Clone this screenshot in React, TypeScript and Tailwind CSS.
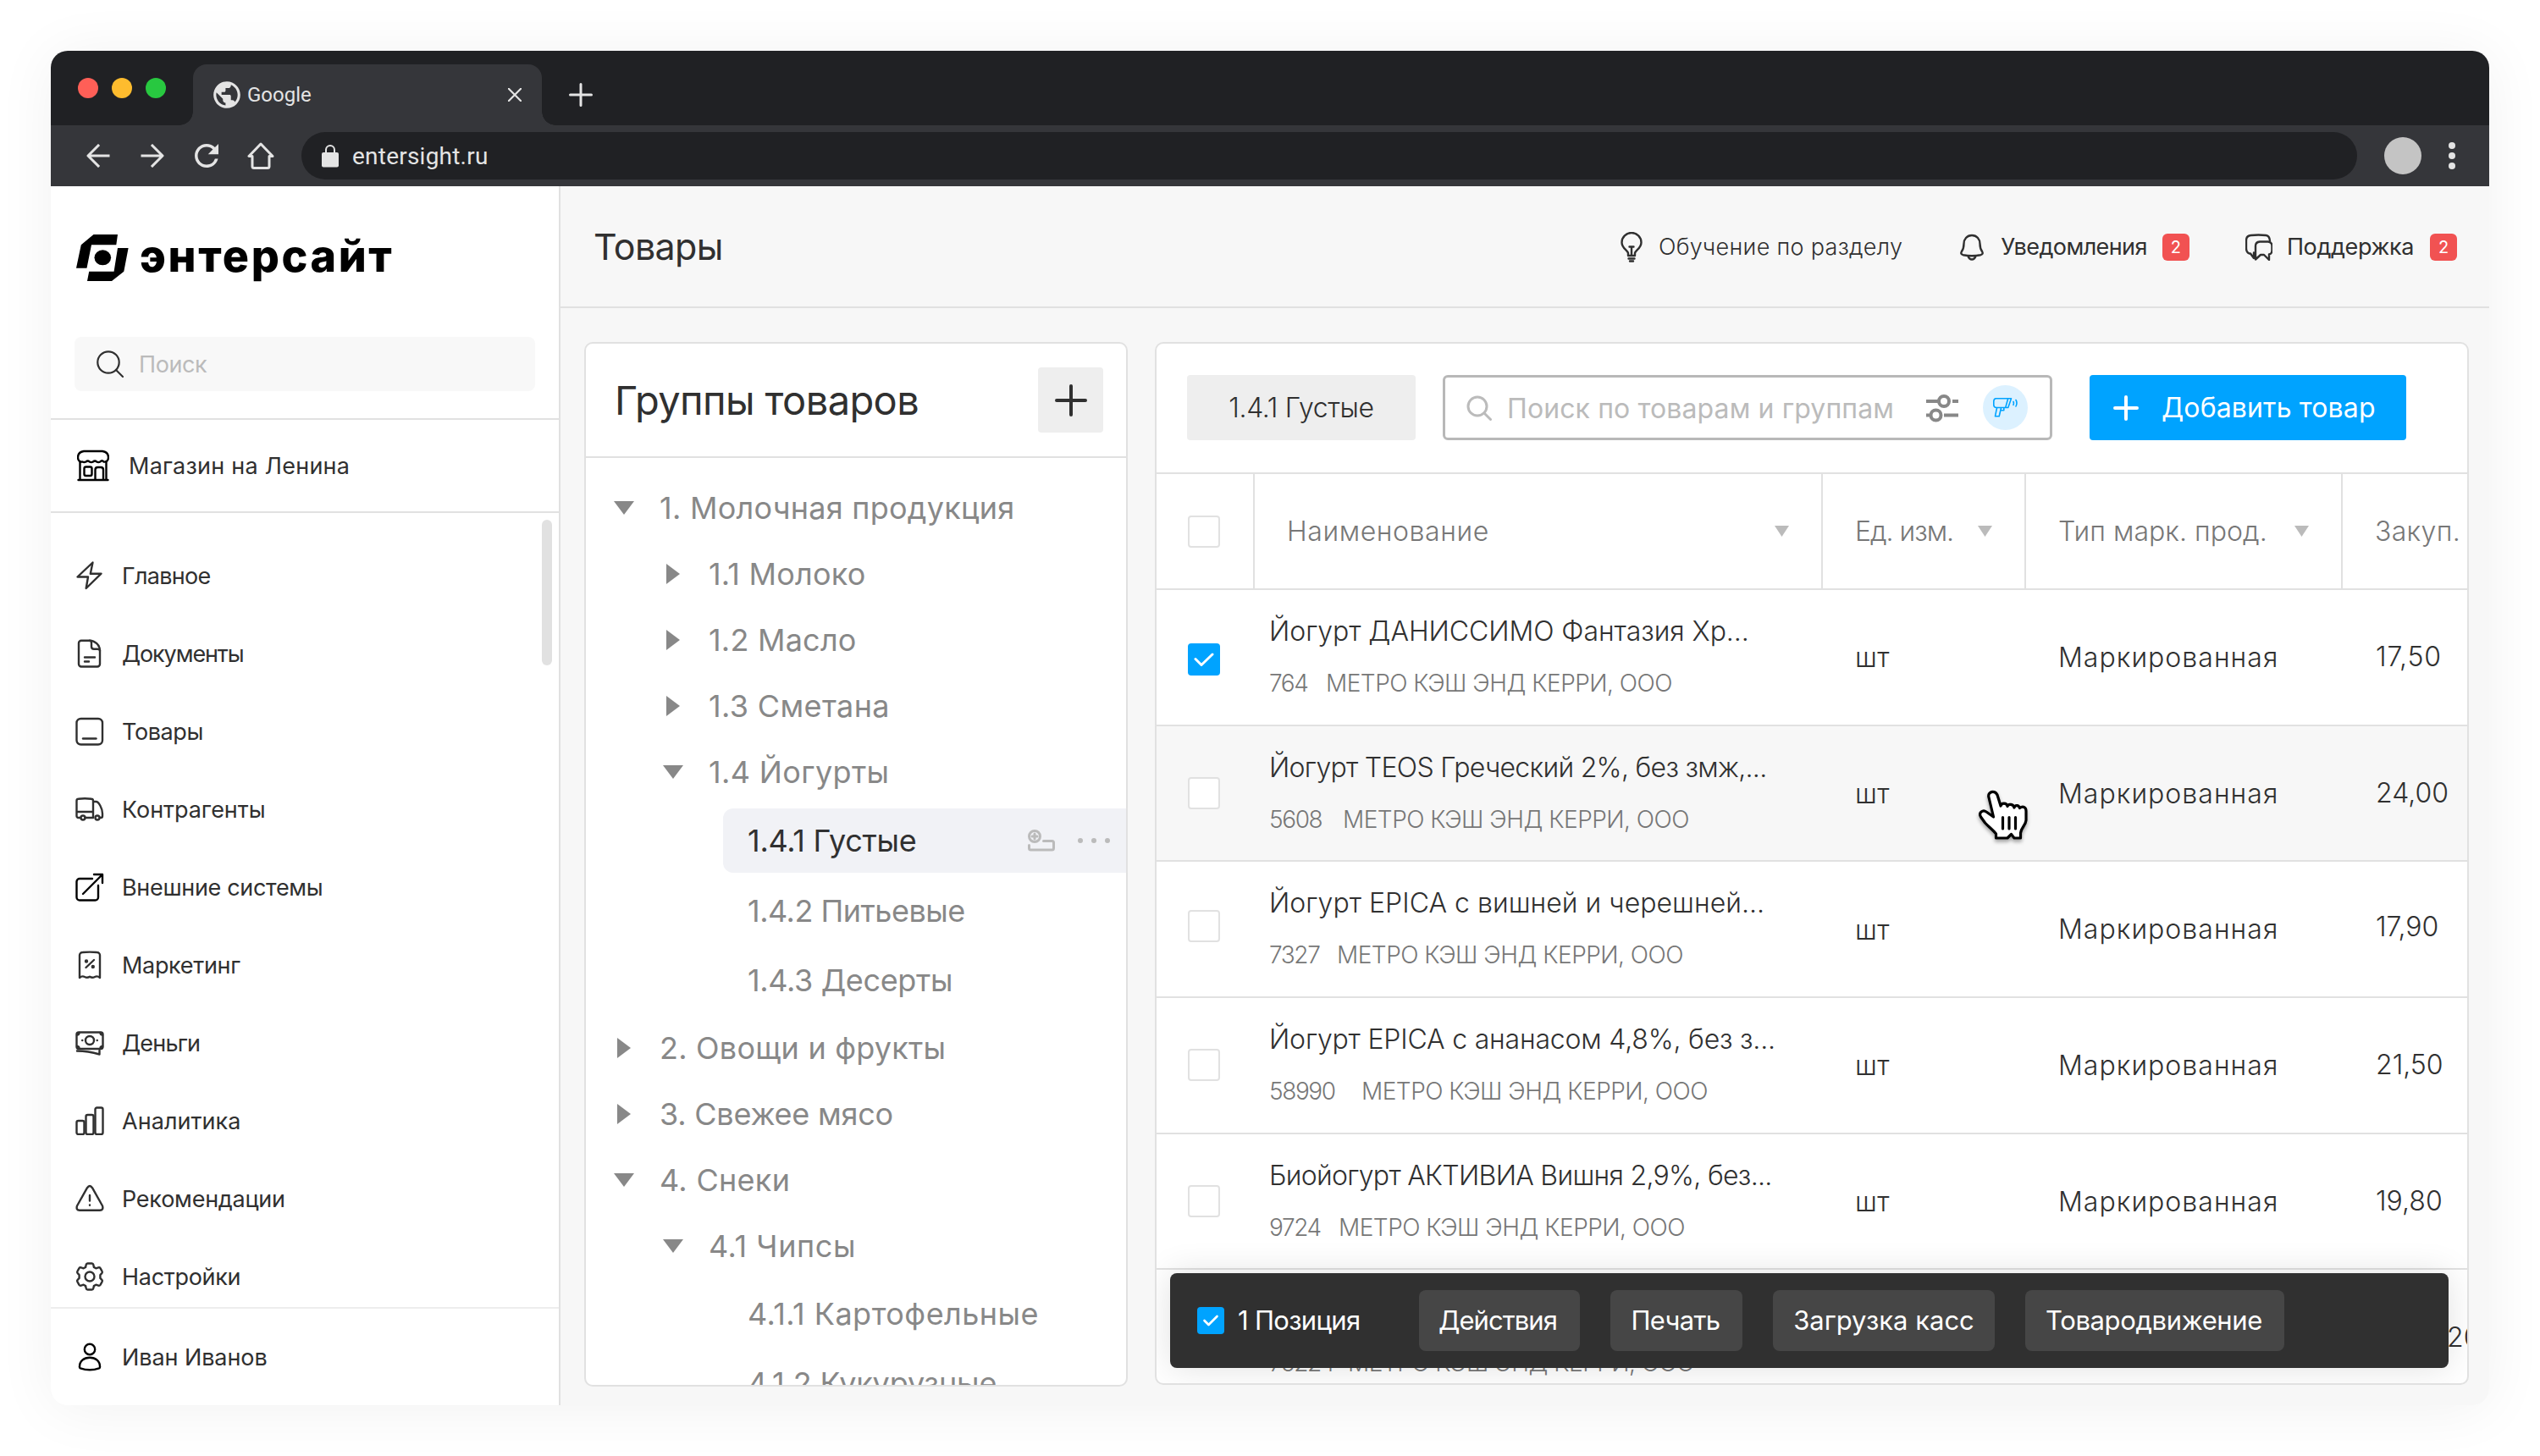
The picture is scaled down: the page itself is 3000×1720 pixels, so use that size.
import type { ReactNode } from "react";
import clsx from "clsx";
import { MdPublic, MdRefresh } from "react-icons/md";

const iconProps = {
  fill: "none",
  stroke: "currentColor",
  strokeWidth: 2.4,
  strokeLinecap: "round" as const,
  strokeLinejoin: "round" as const,
};

function MenuIcon({ children }: { children: ReactNode }) {
  return (
    <svg viewBox="0 0 34 34" className="size-[34px] shrink-0" {...iconProps}>
      {children}
    </svg>
  );
}

const menu = [
  {
    label: "Главное",
    tracking: "tracking-[-0.026em]",
    icon: <path d="M20.5 1.5 2.5 18.5H15L12.7 32 30.5 14.7H17.8Z" />,
  },
  {
    label: "Документы",
    tracking: "tracking-[-0.041em]",
    icon: (
      <>
        <path d="M17 1.7H7A3 3 0 0 0 4 4.7V29.5a3 3 0 0 0 3 3h19a3 3 0 0 0 3-3V13.5C29 7 23 1.7 17 1.7Z" />
        <path d="M17 1.7c1.5 0 2 1.5 2 3v4c0 2 1 3 3 3h4c2 0 3 .5 3 2M11 21.5h12M11 26.5h5" />
      </>
    ),
  },
  {
    label: "Товары",
    tracking: "tracking-[-0.015em]",
    icon: (
      <>
        <rect x="1.5" y="2" width="30.5" height="30.5" rx="5" />
        <path d="M9 25.5h15.5" />
      </>
    ),
  },
  {
    label: "Контрагенты",
    tracking: "tracking-[-0.002em]",
    icon: (
      <>
        <path d="M6 27H3.5a2 2 0 0 1-2-2V7q0-2 2-2.200Q11 3.800 19 4.800q2 .2 2 2.200V27H11.500M1.500 20H21M21 8h3.500c3 0 7.500 8 7.500 14v3a2 2 0 0 1-2 2h-1" />
        <circle cx="9" cy="27" r="2.5" />
        <circle cx="26" cy="27" r="2.5" />
      </>
    ),
  },
  {
    label: "Внешние системы",
    tracking: "tracking-[-0.012em]",
    icon: (
      <path
        stroke="#000"
        d="M20 7H5a3.500 3.500 0 0 0-3.500 3.500v18.500A3.500 3.500 0 0 0 5 32.500h18.500A3.500 3.500 0 0 0 27 29V15M9 25 32 2M22 2h10v10"
      />
    ),
  },
  {
    label: "Маркетинг",
    tracking: "tracking-[-0.012em]",
    icon: (
      <>
        <path d="M5 32V5.500A3.500 3.500 0 0 1 8.500 2q8.500-.8 17 0A3.500 3.500 0 0 1 29 5.500V32q-3-2.600-6-1-3 1.600-6-.3-3 1.900-6 .3-3-1.600-6 1Z" />
        <path d="m12.500 20 9.500-9" />
        <circle cx="13" cy="12.5" r="1" fill="currentColor" />
        <circle cx="20.8" cy="19" r="1" fill="currentColor" />
      </>
    ),
  },
  {
    label: "Деньги",
    tracking: "tracking-[-0.03em]",
    icon: (
      <>
        <rect x="1.5" y="4.5" width="31" height="19.5" rx="2.5" />
        <circle cx="17" cy="14" r="5" />
        <path d="M2 7.500c1.800 0 2.500-1 2.500-2.500M32 7.500c-1.800 0-2.500-1-2.500-2.500M2 21c1.800 0 2.500 1 2.500 2.500M32 21c-1.800 0-2.500 1-2.500 2.500M8.200 14h.1M25.700 14h.1M2 26.500q13 .2 26.500 4V26" />
      </>
    ),
  },
  {
    label: "Аналитика",
    tracking: "tracking-[0.002em]",
    icon: (
      <>
        <rect x="1.5" y="17" width="9" height="16" rx="2" />
        <rect x="12.5" y="10" width="9" height="23" rx="2" />
        <rect x="23.5" y="1.5" width="9" height="31.5" rx="2" />
      </>
    ),
  },
  {
    label: "Рекомендации",
    tracking: "tracking-[-0.009em]",
    icon: (
      <>
        <path d="M14 4.200q3-4.400 6 0L32 25.500Q33.500 30.500 29 30.700H5Q.5 30.500 2 25.500Z" />
        <path d="M17 13v6.500M17 24.500v.2" />
      </>
    ),
  },
  {
    label: "Настройки",
    tracking: "tracking-[-0.011em]",
    icon: (
      <>
        <path d="M14.500 1.500h5q1.500 0 1.800 1.600l.6 2.800 2.400 1.400 2.900-.9q1.500-.4 2.300.8l2.100 3.600q.8 1.300-.3 2.400l-1.900 1.900v3.800l1.900 1.900q1.100 1.100.3 2.400l-2.100 3.600q-.8 1.200-2.300.8l-2.900-.9-2.400 1.400-.6 2.800q-.3 1.600-1.800 1.600h-5q-1.500 0-1.800-1.600l-.6-2.800-2.400-1.400-2.900.9q-1.500.4-2.300-.8l-2.100-3.600q-.8-1.300.3-2.400l1.900-1.900v-3.800l-1.900-1.900q-1.100-1.100-.3-2.400l2.100-3.600q.8-1.200 2.300-.8l2.900.9 2.400-1.400.6-2.800q.3-1.600 1.800-1.600Z" />
        <circle cx="17" cy="17" r="5.5" />
      </>
    ),
  },
];

const tree = [
  { level: 0, open: true, label: "1. Молочная продукция", tracking: "tracking-[0.007em]" },
  { level: 1, open: false, label: "1.1 Молоко", tracking: "tracking-[0.006em]" },
  { level: 1, open: false, label: "1.2 Масло", tracking: "tracking-[0.006em]" },
  { level: 1, open: false, label: "1.3 Сметана", tracking: "tracking-[0.01em]" },
  { level: 1, open: true, label: "1.4 Йогурты", tracking: "tracking-[0.01em]" },
  { level: 2, selected: true, label: "1.4.1 Густые", tracking: "tracking-[-0.007em]" },
  { level: 2, label: "1.4.2 Питьевые", tracking: "tracking-[-0.014em]" },
  { level: 2, label: "1.4.3 Десерты", tracking: "tracking-[-0.01em]" },
  { level: 0, open: false, label: "2. Овощи и фрукты", tracking: "tracking-[0.006em]" },
  { level: 0, open: false, label: "3. Свежее мясо", tracking: "tracking-[-0.006em]" },
  { level: 0, open: true, label: "4. Снеки", tracking: "tracking-[0.008em]" },
  { level: 1, open: true, label: "4.1 Чипсы", tracking: "tracking-[0.016em]" },
  { level: 2, label: "4.1.1 Картофельные", tracking: "tracking-[0.013em]" },
  { level: 2, label: "4.1.2 Кукурузные", tracking: "tracking-[-0.004em]" },
];

const supplier = "МЕТРО КЭШ ЭНД КЕРРИ, ООО";

const products = [
  { name: "Йогурт ДАНИССИМО Фантазия Хр...", tracking: "tracking-[-0.002em]", code: "764", codeWidth: "w-[67px]", price: "17,50", checked: true, boxClass: "pt-1.5", priceClass: "tracking-[0.025em]" },
  { name: "Йогурт TEOS Греческий 2%, без змж,...", tracking: "tracking-[-0.022em]", code: "5608", codeWidth: "w-[87px]", price: "24,00", hovered: true, boxClass: "", priceClass: "" },
  { name: "Йогурт EPICA с вишней и черешней...", tracking: "tracking-[0.001em]", code: "7327", codeWidth: "w-[80px]", price: "17,90", boxClass: "pb-2", priceClass: "pb-1.5" },
  { name: "Йогурт EPICA с ананасом 4,8%, без з...", tracking: "tracking-[-0.006em]", code: "58990", codeWidth: "w-[109px]", price: "21,50", boxClass: "", priceClass: "" },
  { name: "Биойогурт АКТИВИА Вишня 2,9%, без...", tracking: "tracking-[-0.022em]", code: "9724", codeWidth: "w-[82px]", price: "19,80", boxClass: "", priceClass: "" },
  { name: "Йогурт", tracking: "tracking-normal", code: "75224", codeWidth: "w-[93px]", price: "20,40", boxClass: "", priceClass: "", last: true },
];

const bulkActions = [
  { label: "Действия", className: "w-[190px] pr-1 tracking-[-0.03em]" },
  { label: "Печать", className: "w-[156px] pr-0.5 tracking-[-0.021em]" },
  { label: "Загрузка касс", className: "w-[262px]" },
  { label: "Товародвижение", className: "w-[306px] pr-0.5 tracking-[-0.012em]" },
];

function BrowserBar() {
  return (
    <div className="shrink-0 bg-[#202124] text-[#e4e4e4]">
      <div className="flex h-[88px] items-end">
        <div className="flex w-[168px] gap-4 self-start pt-8 pl-8">
          <span className="size-6 rounded-full bg-[#ff5f57]" />
          <span className="size-6 rounded-full bg-[#febc2e]" />
          <span className="size-6 rounded-full bg-[#28c840]" />
        </div>
        <div className="relative flex h-[72px] w-[412px] items-center rounded-t-2xl bg-[#35363a] pr-6 pl-[21px]">
          <span className="absolute bottom-0 -left-4 size-4 bg-[radial-gradient(circle_at_0_0,transparent_15.5px,#35363a_16px)]" />
          <span className="absolute -right-4 bottom-0 size-4 bg-[radial-gradient(circle_at_100%_0,transparent_15.5px,#35363a_16px)]" />
          <MdPublic className="size-[38px]" />
          <span className="ml-[5px] font-['Roboto',sans-serif] text-2xl leading-none">Google</span>
          <svg viewBox="0 0 16 16" className="ml-auto size-4" {...iconProps} strokeWidth={2.2}>
            <path d="m.8.8 14.400 14.400M15.200.8.8 15.200" />
          </svg>
        </div>
        <svg viewBox="0 0 28 28" className="mb-[22px] ml-8 size-7" {...iconProps} strokeWidth={3}>
          <path d="M14 1.500v25M1.500 14h25" />
        </svg>
      </div>
      <div className="flex h-[72px] items-center bg-[#35363a] pl-[42px]">
        <svg viewBox="0 0 28 28" className="size-7" {...iconProps} strokeWidth={3} strokeLinecap="square">
          <path d="M26 14H3M14 2 2 14l12 12" />
        </svg>
        <svg viewBox="0 0 28 28" className="ml-9 size-7" {...iconProps} strokeWidth={3} strokeLinecap="square">
          <path d="M2 14h23M14 2l12 12-12 12" />
        </svg>
        <MdRefresh className="ml-[29px] size-[42px]" />
        <svg viewBox="0 0 32 32" className="ml-[27px] size-8" {...iconProps} strokeWidth={3}>
          <path d="M16 2 2 16.500h4V28.500a2 2 0 0 0 2 2h16a2 2 0 0 0 2-2V16.500h4Z" />
        </svg>
        <div className="ml-8 flex h-14 w-[2428px] items-center rounded-full bg-[#202124] pl-6">
          <svg viewBox="0 0 20 28" className="h-7 w-5">
            <rect y="10" width="20" height="17.5" rx="2" fill="currentColor" />
            <path d="M5 11V7a5 5 0 0 1 10 0v4" fill="none" stroke="currentColor" strokeWidth="2" />
          </svg>
          <span className="ml-4 pt-px font-['Roboto',sans-serif] text-[28px] leading-none tracking-[0.008em]">
            entersight.ru
          </span>
        </div>
        <span className="ml-8 size-11 rounded-full bg-[#c4c4c4]" />
        <div className="ml-8 flex flex-col gap-1">
          <span className="size-2 rounded-full bg-current" />
          <span className="size-2 rounded-full bg-current" />
          <span className="size-2 rounded-full bg-current" />
        </div>
      </div>
    </div>
  );
}

function Sidebar() {
  return (
    <aside className="flex w-[602px] shrink-0 flex-col border-r-2 border-[#e1e1e1] bg-white">
      <div className="mt-[57px] flex h-[55px] pl-[30px]">
        <svg viewBox="0 0 62 55" className="h-[55px] w-[62px]" fill="#000">
          <path d="M20.500 0H49l-1.700 12.300H18L12.500 39.700H0L5.800 12.300ZM49 16h12.600L56.300 43.700 42 55H13l2.200-11.300h29.400Z" />
          <ellipse cx="31.3" cy="27.3" rx="9.8" ry="9" />
        </svg>
        <span className="ml-[13px] pt-px text-[52px] leading-[50px] font-extrabold tracking-[0.05em] text-black">
          энтерсайт
        </span>
      </div>
      <div className="mx-7 mt-[66px] flex h-16 items-center rounded-lg bg-[#f8f8f8] pl-[26px]">
        <svg viewBox="0 0 32 32" className="size-8" {...iconProps} strokeWidth={2.2}>
          <circle cx="14" cy="14" r="12.7" />
          <path d="m23 23 8 8" />
        </svg>
        <span className="ml-[18px] text-[27px] leading-none tracking-[-0.015em] text-[#bbb]">Поиск</span>
      </div>
      <div className="mt-8 flex h-28 items-center border-y-2 border-[#e1e1e1] pl-[31px]">
        <svg viewBox="0 0 38 38" className="size-[38px] text-black" {...iconProps}>
          <path d="M3.500 14.500v21M34.500 14.500v21M1.500 36h35M21.500 36V24q0-3 3-3h3.500q3 0 3 3v12" />
          <path d="M8 2h22q7 1 7 7.500c0 4-3 5.500-5.500 5q-2-2.500-4.200 0-2.100 1.200-4.200 0-2-2-4.200 0-2.100 1.200-4.200 0-2-2-4.200 0-2.200 1-4.200 0C4 15 1 13.500 1 9.500Q1 3 8 2Z" />
          <rect x="8.5" y="20.5" width="9" height="10.5" rx="2" />
        </svg>
        <span className="ml-[23px] text-[27px] leading-none tracking-[0.009em]">Магазин на Ленина</span>
      </div>
      <nav className="relative min-h-0 flex-1 overflow-hidden pt-7">
        {menu.map((item) => (
          <div key={item.label} className="flex h-[92px] items-center gap-[21px] pl-[29px]">
            <MenuIcon>{item.icon}</MenuIcon>
            <span className={clsx("text-[27px] leading-none", item.tracking)}>{item.label}</span>
          </div>
        ))}
        <span className="absolute top-2 right-2 h-[172px] w-3 rounded-full bg-[#e1e1e1]" />
      </nav>
      <div className="flex h-[116px] shrink-0 items-center gap-[21px] border-t-2 border-[#ededed] pl-[29px]">
        <svg viewBox="0 0 34 34" className="size-[34px] text-black" {...iconProps}>
          <circle cx="17" cy="8" r="6.2" />
          <path d="M5 28.500C5 22 10 17.800 17 17.800S29 22 29 28.500q.2 1.300-1 1.800-11 4-22 0-1.200-.5-1-1.800Z" />
        </svg>
        <span className="text-[27px] leading-none tracking-[-0.003em]">Иван Иванов</span>
      </div>
    </aside>
  );
}

function CountBadge() {
  return (
    <span className="flex size-8 items-center justify-center rounded-md bg-[#f15252] text-xl leading-none text-white">
      2
    </span>
  );
}

function PageHeader() {
  return (
    <header className="flex h-36 shrink-0 items-center border-b-2 border-[#e1e1e1] pt-px pr-[38px] pl-[39px] text-[27px] leading-none">
      <h1 className="text-[43px] leading-none tracking-[-0.015em]">Товары</h1>
      <div className="ml-auto flex items-center gap-[66px]">
        <div className="flex items-center gap-[18px] font-light">
          <svg viewBox="0 0 28 36" className="h-9 w-7" {...iconProps}>
            <path d="M10 28v-3C9.500 21.500 2.500 19.500 2.500 12.500a11.500 11.500 0 0 1 23 0c0 7-7 9-7.500 12.500v3M14 27v-9M11.500 17.500h5M10 28h8M10.500 31.500h7M12 34.500h4" />
          </svg>
          <span className="tracking-[0.011em]">Обучение по разделу</span>
        </div>
        <div className="flex items-center">
          <svg viewBox="0 0 32 32" className="size-8" {...iconProps}>
            <path d="M16 2c-6 0-9.500 4.500-9.500 10 0 5-1 7-2.800 9.500-1.200 2 .2 3.300 2 3.700q10.300 2 20.600 0c1.800-.4 3.200-1.700 2-3.700-1.800-2.500-2.800-4.500-2.800-9.500 0-5.500-3.500-10-9.500-10ZM11.500 26.500c1 3 2.500 4 4.500 4s3.500-1 4.500-4" />
          </svg>
          <span className="ml-[18px] tracking-[-0.0215em]">Уведомления</span>
          <span className="ml-[18px]">
            <CountBadge />
          </span>
        </div>
        <div className="flex items-center">
          <svg viewBox="0 0 32 32" className="size-8" {...iconProps}>
            <path d="M10 22.500V29l-4-5.500H4.500Q1 22 1 17V8q0-5.500 5.500-6 9-1 18 0 4 .5 4.500 6.500" />
            <path d="M17 9.500h10q4.500.5 4.500 5v5q0 4.500-3.500 5V31l-6-6h-4l-6 5.500v-6.500V14.500q0-4.500 5-5Z" />
          </svg>
          <span className="ml-[17px] tracking-[-0.014em]">Поддержка</span>
          <span className="ml-[19px]">
            <CountBadge />
          </span>
        </div>
      </div>
    </header>
  );
}

function TreeArrow({ open }: { open?: boolean }) {
  return (
    <svg viewBox="0 0 24 24" className="size-6" fill="#888">
      {open ? <path d="M0 4h24L12 20Z" /> : <path d="M4 0v24l16-12Z" />}
    </svg>
  );
}

function GroupsPanel() {
  return (
    <section className="flex h-[1234px] w-[642px] shrink-0 flex-col overflow-hidden rounded-[10px] border-2 border-[#e1e1e1] bg-white">
      <div className="flex h-[135px] shrink-0 items-center justify-between border-b-2 border-[#e1e1e1] pr-[27px] pl-[34px]">
        <h2 className="text-[47px] leading-none tracking-[-0.013em]">Группы товаров</h2>
        <span className="flex size-[77px] items-center justify-center rounded bg-[#eee]">
          <svg viewBox="0 0 38 38" className="size-[38px]" {...iconProps} strokeWidth={4}>
            <path d="M19 2v34M2 19h34" />
          </svg>
        </span>
      </div>
      <div className="pt-5 text-[36px] leading-none text-[#888]">
        {tree.map((node) => {
          if (node.selected) {
            return (
              <div key={node.label} className="flex h-[84px] items-center pl-[162px]">
                <div className="flex h-[76px] flex-1 items-center rounded-l-xl bg-[#f1f2f6] pr-[19px] pl-[29px]">
                  <span className={clsx("text-[#303030]", node.tracking)}>{node.label}</span>
                  <svg viewBox="0 0 32 26" className="ml-auto h-[26px] w-8 text-[#bbb]" {...iconProps} strokeWidth={3}>
                    <circle cx="8" cy="8" r="6.5" />
                    <path d="M8 5v6M5 8h6M18.500 13.500h10a2 2 0 0 1 2 2v6.500a2 2 0 0 1-2 2h-25a2 2 0 0 1-2-2v-3.500" />
                  </svg>
                  <div className="ml-[27px] flex gap-2.5 text-[#bbb]">
                    <span className="size-1.5 rounded-full bg-current" />
                    <span className="size-1.5 rounded-full bg-current" />
                    <span className="size-1.5 rounded-full bg-current" />
                  </div>
                </div>
              </div>
            );
          }

          if (node.level === 2) {
            return (
              <div key={node.label} className="flex h-[82px] items-center pl-[191px]">
                <span className={node.tracking}>{node.label}</span>
              </div>
            );
          }

          return (
            <div
              key={node.label}
              className={clsx("flex h-[78px] items-center gap-[30px]", node.level === 0 ? "pl-[33px]" : "pl-[91px]")}
            >
              <TreeArrow open={node.open} />
              <span className={node.tracking}>{node.label}</span>
            </div>
          );
        })}
      </div>
    </section>
  );
}

function Checkbox({ checked }: { checked?: boolean }) {
  if (!checked) {
    return <span className="size-[38px] rounded border-2 border-[#e1e1e1] bg-white" />;
  }

  return (
    <span className="flex size-[38px] items-center justify-center rounded bg-[#00a3ff] text-white">
      <svg viewBox="0 0 24 24" className="size-6" {...iconProps} strokeWidth={3}>
        <path d="m2 11.500 7 7L22 6" />
      </svg>
    </span>
  );
}

function SortArrow() {
  return (
    <svg viewBox="0 0 17 13" className="h-[13px] w-[17px]" fill="#bbb">
      <path d="M0 0h17L8.500 13Z" />
    </svg>
  );
}

function Toolbar() {
  return (
    <div className="flex h-[154px] shrink-0 items-center border-b-2 border-[#e1e1e1] pb-px pl-9 text-[32px] leading-none">
      <span className="flex h-[77px] w-[270px] items-center justify-center rounded bg-[#eee] font-light tracking-[-0.01em]">
        1.4.1 Густые
      </span>
      <div className="ml-8 flex h-[77px] w-[720px] items-center rounded-md border-[3px] border-[#b8b8b8] pl-[25px] text-[#bbb]">
        <svg viewBox="0 0 30 30" className="size-[30px]" {...iconProps} strokeWidth={3}>
          <circle cx="13" cy="13" r="11" />
          <path d="m21.500 21.500 7 7" />
        </svg>
        <span className="ml-[18px] pt-0.5 tracking-[0.0035em]">Поиск по товарам и группам</span>
        <svg viewBox="0 0 40 34" className="ml-[37px] h-[34px] w-10" fill="none" stroke="#888" strokeWidth={4}>
          <path d="M1 9h15M32 9h7M1 25.500h5M22 25.500h17" />
          <circle cx="22" cy="9" r="6" />
          <circle cx="12.5" cy="25.5" r="6" />
        </svg>
        <span className="ml-7 flex size-[53px] items-center justify-center rounded-full bg-[#dcf1ff] text-[#00a3ff]">
          <svg viewBox="0 0 32 26" className="h-[26px] w-8" {...iconProps} strokeWidth={1.6}>
            <path d="M4.500 1.800H22.500L18.800 12.500H5Q2 12.500 1.800 9.500V5Q2 2 4.500 1.800ZM18.700 1.800 15.700 12.500M5.500 13 3.500 22.700H8.200L10.500 13M9.800 15.800h4V13M25 5.500q1 1.800 0 3.800M28 3.500q2 3.500 0 7.500" />
          </svg>
        </span>
      </div>
      <span className="ml-11 flex h-[77px] w-[374px] items-center rounded bg-[#00a3ff] pl-7 text-white">
        <svg viewBox="0 0 30 30" className="size-[30px]" {...iconProps} strokeWidth={4}>
          <path d="M15 2v26M2 15h26" />
        </svg>
        <span className="ml-[27px] tracking-[0.004em]">Добавить товар</span>
      </span>
    </div>
  );
}

function ProductsPanel() {
  return (
    <section className="relative flex h-[1232px] w-[1552px] flex-col overflow-hidden rounded-[10px] border-2 border-[#e1e1e1] bg-white">
      <Toolbar />
      <div className="flex h-[137px] shrink-0 border-b-2 border-[#e1e1e1] text-[32px] leading-none font-light text-[#777]">
        <div className="flex w-[116px] shrink-0 items-center border-r-2 border-[#e1e1e1] pl-[37px]">
          <Checkbox />
        </div>
        <div className="flex w-[671px] shrink-0 items-center justify-between border-r-2 border-[#e1e1e1] pr-[38px] pl-[38px]">
          <span className="tracking-[0.018em]">Наименование</span>
          <SortArrow />
        </div>
        <div className="flex w-[240px] shrink-0 items-center justify-between border-r-2 border-[#e1e1e1] pr-[38px] pl-[38px]">
          <span className="tracking-[-0.032em]">Ед. изм.</span>
          <SortArrow />
        </div>
        <div className="flex w-[374px] shrink-0 items-center justify-between border-r-2 border-[#e1e1e1] pr-[38px] pl-[38px]">
          <span className="tracking-[0.001em]">Тип марк. прод.</span>
          <SortArrow />
        </div>
        <div className="flex items-center pl-[38px] tracking-[0.01em]">Закуп.</div>
      </div>

      {products.map((product) => (
        <div
          key={product.code}
          className={clsx(
            "flex h-[160.7px] shrink-0 border-b-2 border-[#e1e1e1] text-[32px] leading-none font-light",
            product.hovered && "bg-[#f7f7f7]",
          )}
        >
          <div className={clsx("flex w-[116px] shrink-0 items-center pl-[37px]", product.boxClass)}>
            <Checkbox checked={product.checked} />
          </div>
          <div className="w-[671px] shrink-0 pt-[33px] pl-[17px]">
            <p className={clsx("whitespace-nowrap", product.tracking)}>{product.name}</p>
            <p className="mt-[31px] flex text-[28px] leading-none text-[#777]">
              <span className={clsx("shrink-0 tracking-[-0.05em]", product.codeWidth)}>{product.code}</span>
              <span className="tracking-[-0.018em]">{supplier}</span>
            </p>
          </div>
          <div className="flex w-[240px] shrink-0 items-center pt-0.5 pl-[38px] tracking-[0.014em]">шт</div>
          <div className="flex w-[374px] shrink-0 items-center pt-px pl-[38px] tracking-[0.032em]">Маркированная</div>
          <div className={clsx("flex items-center", product.last ? "pl-[123px]" : "pl-[39px]", product.priceClass)}>
            {product.price}
          </div>
        </div>
      ))}

      <div className="absolute top-[1098px] left-4 flex h-28 w-[1510px] items-center rounded-lg bg-[#303030] pl-8 text-[31px] leading-none text-white shadow-[0_0_40px_rgba(0,0,0,0.12)]">
        <span className="flex size-8 items-center justify-center rounded bg-[#00a3ff]">
          <svg viewBox="0 0 24 24" className="size-5" {...iconProps} strokeWidth={3.2}>
            <path d="m3 12 6 6L21 6" />
          </svg>
        </span>
        <span className="w-[230px] pb-0.5 pl-4 tracking-[-0.022em]">1 Позиция</span>
        <div className="flex gap-9">
          {bulkActions.map((action) => (
            <span
              key={action.label}
              className={clsx(
                "flex h-[72px] items-center justify-center rounded-lg bg-[#464646] pb-0.5",
                action.className,
              )}
            >
              {action.label}
            </span>
          ))}
        </div>
      </div>
    </section>
  );
}

function HandCursor() {
  return (
    <svg
      viewBox="-2 -2 62 64"
      className="absolute top-[872px] left-[2275px] h-16 w-[62px] drop-shadow-[0_3px_2px_rgba(0,0,0,0.35)]"
      fill="#fff"
      stroke="#000"
      strokeWidth={3.2}
      strokeLinejoin="round"
      strokeLinecap="round"
    >
      <path d="M12 8C10 1.500 19 -1.500 22 5l4 13C27 14 33 14 34 18.500 35 15 41 16 42 20c1-3.500 5.500-3 6.500.5C52 18 56 19 56 24v11c-.5 6-6 9-6.500 15v6H42l-3.500-4.500L34 56H20.500V51C17 46.500 11 42 7.500 38L2.500 31C-.5 26 5 22 9 25l8.500 6Z" />
      <path d="M28.500 31.500V45M36 31.500V45M43.500 31.500V45" />
    </svg>
  );
}

export default function App() {
  return (
    <main className="h-[1720px] w-[3000px] overflow-hidden bg-white p-[60px] font-['Inter','Liberation_Sans',sans-serif] text-[#303030]">
      <div className="relative flex h-[1600px] w-[2880px] flex-col rounded-[20px] shadow-[0_4px_70px_rgba(0,0,0,0.06)]">
        <div className="flex h-full flex-col overflow-hidden rounded-[20px] bg-[#f7f7f7]">
          <BrowserBar />
          <div className="flex min-h-0 flex-1">
            <Sidebar />
            <div className="flex min-w-0 flex-1 flex-col">
              <PageHeader />
              <div className="flex gap-8 pt-10 pl-7">
                <GroupsPanel />
                <ProductsPanel />
              </div>
            </div>
          </div>
        </div>
        <HandCursor />
      </div>
    </main>
  );
}
